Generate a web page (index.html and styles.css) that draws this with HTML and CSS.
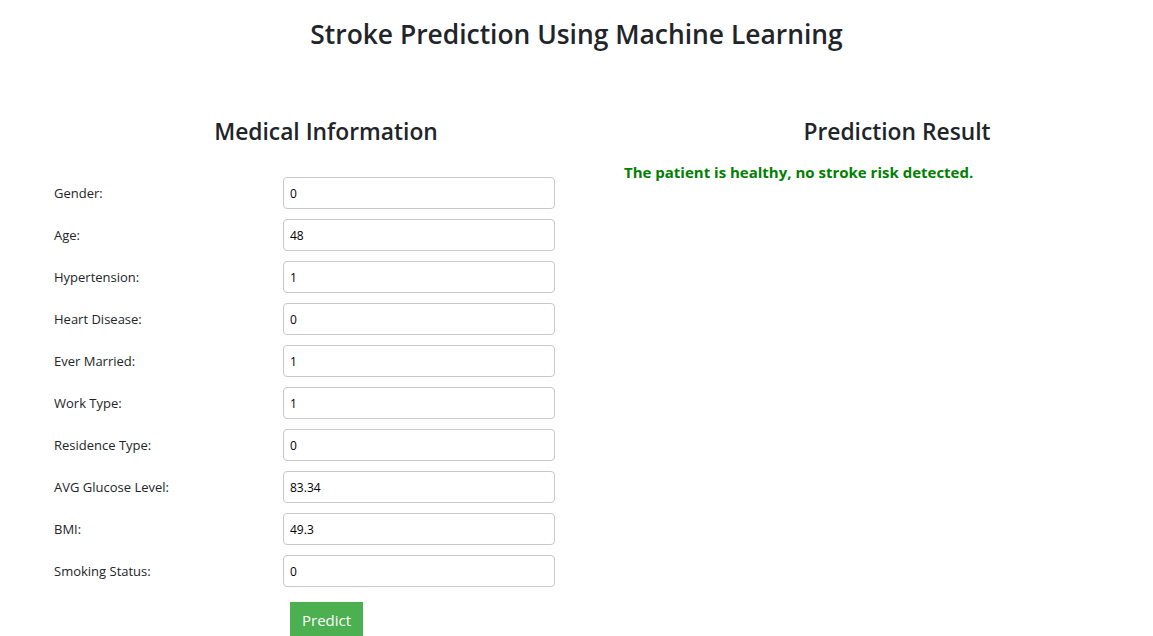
FILE: index.html
```html
<!DOCTYPE html>
<html lang="en">
<head>
<meta charset="utf-8">
<title>Stroke Prediction Using Machine Learning</title>
<link rel="stylesheet" href="styles.css">
</head>
<body>
<h1 class="title">Stroke Prediction Using Machine Learning</h1>
<div class="layout">
  <section class="col col-form">
    <h2 class="heading">Medical Information</h2>
    <form class="form">
      <div class="row"><label class="lbl">Gender:</label><input class="inp" type="text" value="0"></div>
      <div class="row"><label class="lbl">Age:</label><input class="inp" type="text" value="48"></div>
      <div class="row"><label class="lbl">Hypertension:</label><input class="inp" type="text" value="1"></div>
      <div class="row"><label class="lbl">Heart Disease:</label><input class="inp" type="text" value="0"></div>
      <div class="row"><label class="lbl">Ever Married:</label><input class="inp" type="text" value="1"></div>
      <div class="row"><label class="lbl">Work Type:</label><input class="inp" type="text" value="1"></div>
      <div class="row"><label class="lbl">Residence Type:</label><input class="inp" type="text" value="0"></div>
      <div class="row"><label class="lbl">AVG Glucose Level:</label><input class="inp" type="text" value="83.34"></div>
      <div class="row"><label class="lbl">BMI:</label><input class="inp" type="text" value="49.3"></div>
      <div class="row"><label class="lbl">Smoking Status:</label><input class="inp" type="text" value="0"></div>
      <div class="actions"><button class="btn" type="button">Predict</button></div>
    </form>
  </section>
  <section class="col col-result">
    <h2 class="heading heading-result">Prediction Result</h2>
    <p class="result">The patient is healthy, no stroke risk detected.</p>
  </section>
</div>
</body>
</html>
```
FILE: styles.css
```css
html, body {
  margin: 0;
  padding: 0;
  background: #ffffff;
  color: #212529;
  font-family: "Open Sans", "Noto Sans", "Liberation Sans", sans-serif;
  overflow: hidden;
}
.title {
  margin: 0;
  padding-top: 14px;
  height: 40px;
  font-size: 26.4px;
  line-height: 40px;
  font-weight: 600;
  text-align: center;
}
.layout {
  display: grid;
  grid-template-columns: 544px 1fr;
  column-gap: 26px;
  padding-left: 54px;
  margin-top: 60px;
}
.heading {
  margin: 0;
  font-size: 22.8px;
  line-height: 36px;
  font-weight: 600;
  text-align: center;
}
.heading-result {
  padding-left: 17px;
}
.form {
  margin-top: 27px;
  display: flex;
  flex-direction: column;
  gap: 10px;
}
.row {
  display: grid;
  grid-template-columns: 229px 272px;
  align-items: center;
}
.lbl {
  font-size: 13px;
}
.inp {
  box-sizing: border-box;
  height: 32px;
  width: 272px;
  margin: 0;
  padding: 0 6px;
  border: 1px solid #c8c8c8;
  border-radius: 4px;
  font-family: inherit;
  font-size: 12px;
  color: #000;
}
.actions {
  padding-left: 236px;
  padding-top: 5px;
}
.btn {
  background: #4caf50;
  color: #fff;
  border: none;
  height: 36px;
  padding: 0 12px;
  font-family: inherit;
  font-size: 15px;
  border-radius: 0;
}
.result {
  margin: 12px 0 0;
  color: #008000;
  font-weight: 700;
  font-size: 15px;
}
```
